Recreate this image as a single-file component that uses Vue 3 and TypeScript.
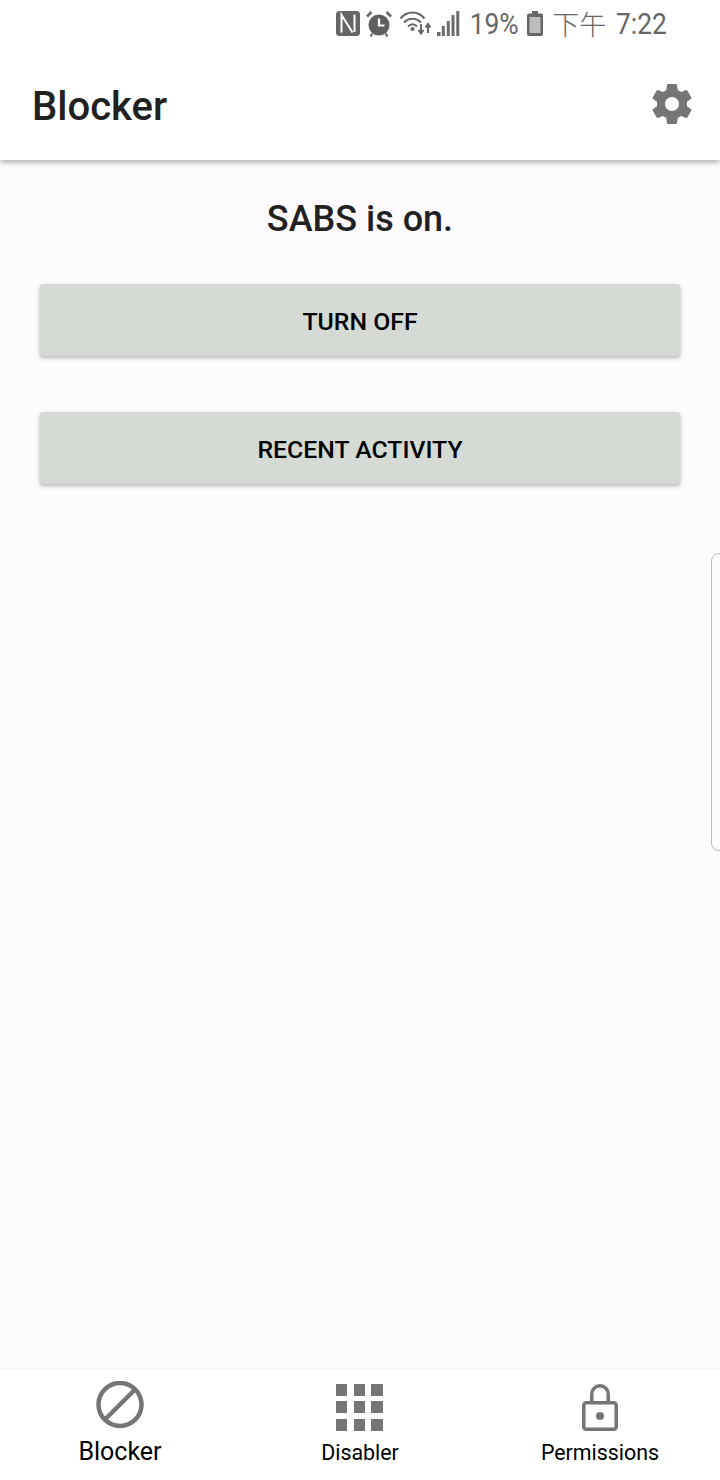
<template>
  <div class="screen">
    <div class="status-bar">
      <svg class="st-nfc" viewBox="0 0 24 25" width="24" height="25">
        <rect width="24" height="25" rx="3.500" fill="#666" />
        <path d="M5.500 21.500V4l11 17.500" fill="none" stroke="#fff" stroke-width="2" />
        <path d="M18.500 3.500V21" fill="none" stroke="#fff" stroke-width="2" />
      </svg>
      <svg class="st-alarm" viewBox="0 0 26 26" width="26" height="26">
        <circle cx="13" cy="14" r="10.500" fill="#5f5f5f" />
        <path d="M1 5.500L5.500 1M25 5.500L20.500 1" fill="none" stroke="#666" stroke-width="2.500" />
        <path d="M13 7.500v7h5.500" fill="none" stroke="#fff" stroke-width="2.200" />
        <path d="M6.500 22.500L4.500 25.500M19.500 22.500L21.500 25.500" stroke="#666" stroke-width="2.200" />
      </svg>
      <svg class="st-wifi" viewBox="0 0 30 25" width="30" height="25">
        <g fill="none" stroke="#666" stroke-width="2.200">
          <path d="M0.500 7.500C7-0.500 18-0.500 24.500 7.500" />
          <path d="M4 11.500C9 6.500 16 6.500 21 11.500" />
          <path d="M8 15.500c3-3 6-3 9 0" />
        </g>
        <circle cx="12.500" cy="18" r="2" fill="#666" />
        <path d="M21 13v9M18.500 19l2.500 3.500 2.500-3.500M28 22v-8.500M25.500 16.500l2.500-3.500 2.500 3.500" fill="none" stroke="#666" stroke-width="2" />
      </svg>
      <svg class="st-signal" viewBox="0 0 24 25" width="24" height="25">
        <path fill="#6a6a6a" d="M1 25h3.500v-4H1zM5.800 25h3V15h-3zM10.800 25h3V10h-3zM15.500 25h3V4h-3zM20.300 25h3V0h-3z" />
      </svg>
      <span class="st-narrow st-percent">19%</span>
      <svg class="st-battery" viewBox="0 0 16 25" width="16" height="25">
        <path d="M5 0h6v2.500h3a2 2 0 0 1 2 2V23a2 2 0 0 1-2 2H2a2 2 0 0 1-2-2V4.500a2 2 0 0 1 2-2h3z" fill="#666" />
        <rect x="2.500" y="6" width="11" height="16" fill="#bdbdbd" />
      </svg>
      <span class="st-cjk">下午</span>
      <span class="st-narrow st-clock">7:22</span>
    </div>

    <header class="toolbar">
      <h1 class="toolbar-title">Blocker</h1>
      <svg class="gear" viewBox="0 0 24 24" width="48" height="48">
        <path fill="#757575" d="M19.430 12.980c.040-.320.070-.640.070-.980s-.030-.660-.070-.980l2.110-1.650c.190-.150.240-.420.120-.640l-2-3.460c-.120-.220-.390-.300-.610-.220l-2.490 1c-.520-.400-1.080-.730-1.690-.980l-.380-2.650C14.460 2.180 14.250 2 14 2h-4c-.250 0-.460.180-.490.420l-.380 2.650c-.610.250-1.170.590-1.690.980l-2.490-1c-.230-.090-.490 0-.610.220l-2 3.460c-.130.220-.070.490.120.640l2.110 1.650c-.040.320-.070.650-.070.980s.030.660.070.980l-2.110 1.650c-.190.150-.240.420-.120.640l2 3.460c.120.220.390.300.610.220l2.490-1c.520.400 1.080.730 1.690.980l.380 2.650c.030.240.240.420.490.420h4c.250 0 .460-.180.490-.420l.380-2.650c.610-.250 1.170-.590 1.690-.980l2.490 1c.230.090.490 0 .610-.220l2-3.460c.120-.220.070-.490-.120-.640l-2.110-1.650zM12 15.500c-1.930 0-3.500-1.570-3.500-3.500s1.570-3.500 3.500-3.500 3.500 1.570 3.500 3.500-1.570 3.500-3.500 3.500z" />
      </svg>
    </header>

    <main class="content">
      <p class="state">SABS is on.</p>
      <button v-for="label in actions" :key="label" class="action" type="button">{{ label }}</button>
      <div class="edge-handle"></div>
    </main>

    <nav class="tabs">
      <div class="tab tab-active">
        <svg viewBox="0 0 48 51" width="48" height="51">
          <circle cx="24" cy="23.500" r="21.500" fill="none" stroke="#757575" stroke-width="4.500" />
          <path d="M9 38.500l30-30" stroke="#757575" stroke-width="4.500" />
        </svg>
        <span class="tab-label">Blocker</span>
      </div>
      <div class="tab">
        <svg viewBox="0 0 48 51" width="48" height="51">
          <path fill="#757575" d="M0 3h11v12H0zM18 3h11v12H18zM35 3h12v12H35zM0 20h11v12H0zM18 20h11v12H18zM35 20h12v12H35zM0 38h11v12H0zM18 38h11v12H18zM35 38h12v12H35z" />
        </svg>
        <span class="tab-label">Disabler</span>
      </div>
      <div class="tab">
        <svg viewBox="0 0 48 51" width="48" height="51">
          <rect x="7.750" y="21.750" width="32.500" height="26.500" rx="2.500" fill="none" stroke="#757575" stroke-width="3.500" />
          <path d="M15.750 21.750V13a8.250 8.250 0 0 1 16.500 0v8.750" fill="none" stroke="#757575" stroke-width="3.500" />
          <circle cx="24" cy="35" r="4" fill="#757575" />
        </svg>
        <span class="tab-label">Permissions</span>
      </div>
    </nav>
  </div>
</template>

<script setup lang="ts">
const actions: string[] = ['TURN OFF', 'RECENT ACTIVITY']
</script>

<style>
html,
body {
  margin: 0;
  background: #fefbfe;
}
</style>

<style scoped>
.screen {
  display: flex;
  flex-direction: column;
  height: 1480px;
  font-family: Roboto, "Noto Sans CJK SC", sans-serif;
  background: #fefbfe;
  overflow: hidden;
}

.status-bar {
  height: 50px;
  display: flex;
  align-items: center;
  justify-content: flex-end;
  padding: 0 53px 3px 0;
  background: #fff;
  color: #666;
  font-size: 30px;
  box-sizing: border-box;
  position: relative;
  z-index: 2;
}

.st-nfc {
  margin-right: 6px;
}

.st-alarm {
  margin-right: 8px;
}

.st-wifi {
  margin-right: 6px;
  overflow: visible;
}

.st-signal {
  margin-right: 10px;
}

.st-narrow {
  display: inline-block;
  transform: scaleX(0.88);
  transform-origin: right center;
}

.st-percent {
  margin-left: -7px;
  margin-right: 8px;
}

.st-battery {
  margin-right: 9px;
}

.st-cjk {
  font-size: 27px;
  font-weight: 300;
  margin-right: 4px;
}

.st-clock {
  margin-left: -1px;
}

.toolbar {
  height: 110px;
  display: flex;
  align-items: center;
  justify-content: space-between;
  padding: 0 24px 0 32px;
  background: #fff;
  box-shadow: 0 2px 6px rgba(0, 0, 0, 0.35);
  position: relative;
  z-index: 1;
}

.toolbar-title {
  margin: 2px 0 0;
  font-size: 40px;
  font-weight: 500;
  color: #212121;
}

.gear {
  margin-bottom: 2px;
}

.content {
  flex: 1;
  position: relative;
  display: flex;
  flex-direction: column;
  align-items: center;
  padding: 0 40px;
  min-height: 0;
}

.state {
  margin: 37px 0 43px;
  font-size: 36px;
  line-height: 44px;
  font-weight: 500;
  color: #212121;
}

.action {
  width: 100%;
  height: 72px;
  margin-bottom: 56px;
  border: none;
  border-radius: 3px;
  background: #d6dad5;
  box-shadow: 0 2px 4px rgba(0, 0, 0, 0.28);
  font-family: inherit;
  font-size: 24.800px;
  font-weight: 500;
  color: #000;
  padding: 2px 0 0;
}

.edge-handle {
  position: absolute;
  top: 393px;
  right: -9px;
  width: 16px;
  height: 296px;
  border: 1px solid #bdbabd;
  border-radius: 8px;
}

.tabs {
  height: 113px;
  display: grid;
  grid-template-columns: repeat(3, 1fr);
  background: #fff;
  border-top: 2px solid #f8f5f8;
  box-sizing: border-box;
}

.tab {
  display: flex;
  flex-direction: column;
  align-items: center;
  padding-top: 12px;
}

.tab-label {
  margin-top: 6px;
  font-size: 21.400px;
  line-height: 30px;
  color: #000;
}

.tab-active .tab-label {
  font-size: 25px;
  margin-top: 5px;
}
</style>
